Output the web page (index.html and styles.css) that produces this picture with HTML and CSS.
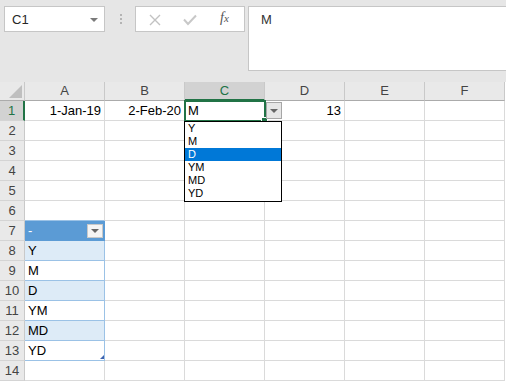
FILE: index.html
```html
<!DOCTYPE html>
<html>
<head>
<meta charset="utf-8">
<link rel="stylesheet" href="styles.css">
</head>
<body>
<div class="toolbar">
  <div class="namebox"><span class="nb-text">C1</span><span class="nb-arrow"></span></div>
  <div class="grip"><i></i><i></i><i></i></div>
  <div class="fbuttons">
    <svg class="ico-x" width="12" height="12" viewBox="0 0 12 12"><path d="M1 1 L11 11 M11 1 L1 11" stroke="#c2c2c2" stroke-width="1.4" fill="none"/></svg>
    <svg class="ico-check" width="14" height="12" viewBox="0 0 14 12"><path d="M1 5.5 L5 10 L13 1.5" stroke="#c8c8c8" stroke-width="2" fill="none"/></svg>
    <span class="fx">f<span class="fx-x">x</span></span>
  </div>
  <div class="formula">M</div>
</div>

<div class="sheet">
  <div class="row head">
    <div class="rh corner"><svg width="24" height="18" viewBox="0 0 24 18"><polygon points="22,3 22,16 9,16" fill="#bfbfbf"/></svg></div>
    <div class="ch">A</div><div class="ch">B</div><div class="ch sel">C</div><div class="ch">D</div><div class="ch">E</div><div class="ch">F</div>
  </div>
  <div class="row">
    <div class="rh sel">1</div>
    <div class="c r">1-Jan-19</div><div class="c r">2-Feb-20</div><div class="c">M</div><div class="c r">13</div><div class="c"></div><div class="c"></div>
  </div>
  <div class="row"><div class="rh">2</div><div class="c"></div><div class="c"></div><div class="c"></div><div class="c"></div><div class="c"></div><div class="c"></div></div>
  <div class="row"><div class="rh">3</div><div class="c"></div><div class="c"></div><div class="c"></div><div class="c"></div><div class="c"></div><div class="c"></div></div>
  <div class="row"><div class="rh">4</div><div class="c"></div><div class="c"></div><div class="c"></div><div class="c"></div><div class="c"></div><div class="c"></div></div>
  <div class="row"><div class="rh">5</div><div class="c"></div><div class="c"></div><div class="c"></div><div class="c"></div><div class="c"></div><div class="c"></div></div>
  <div class="row"><div class="rh">6</div><div class="c above-table"></div><div class="c"></div><div class="c"></div><div class="c"></div><div class="c"></div><div class="c"></div></div>
  <div class="row">
    <div class="rh">7</div>
    <div class="c t-head"><span>-</span><span class="filter-btn"><i></i></span></div>
    <div class="c"></div><div class="c"></div><div class="c"></div><div class="c"></div><div class="c"></div>
  </div>
  <div class="row"><div class="rh">8</div><div class="c t band">Y</div><div class="c"></div><div class="c"></div><div class="c"></div><div class="c"></div><div class="c"></div></div>
  <div class="row"><div class="rh">9</div><div class="c t">M</div><div class="c"></div><div class="c"></div><div class="c"></div><div class="c"></div><div class="c"></div></div>
  <div class="row"><div class="rh">10</div><div class="c t band">D</div><div class="c"></div><div class="c"></div><div class="c"></div><div class="c"></div><div class="c"></div></div>
  <div class="row"><div class="rh">11</div><div class="c t">YM</div><div class="c"></div><div class="c"></div><div class="c"></div><div class="c"></div><div class="c"></div></div>
  <div class="row"><div class="rh">12</div><div class="c t band">MD</div><div class="c"></div><div class="c"></div><div class="c"></div><div class="c"></div><div class="c"></div></div>
  <div class="row"><div class="rh">13</div><div class="c t last">YD<span class="resize"></span></div><div class="c"></div><div class="c"></div><div class="c"></div><div class="c"></div><div class="c"></div></div>
  <div class="row"><div class="rh">14</div><div class="c"></div><div class="c"></div><div class="c"></div><div class="c"></div><div class="c"></div><div class="c"></div></div>
</div>

<div class="selection"><span class="fill-handle"></span></div>
<div class="dd-btn"><i></i></div>
<ul class="dd-list">
  <li>Y</li>
  <li>M</li>
  <li class="hl">D</li>
  <li>YM</li>
  <li>MD</li>
  <li>YD</li>
</ul>
</body>
</html>
```

FILE: styles.css
```css
html, body {
  margin: 0;
  padding: 0;
}
body {
  width: 506px;
  height: 382px;
  overflow: hidden;
  position: relative;
  background: #ffffff;
  font-family: "Liberation Sans", Arial, sans-serif;
  font-size: 13px;
  color: #000;
}

/* ---------- toolbar ---------- */
.toolbar {
  height: 82px;
  box-sizing: border-box;
  background: #e6e6e6;
  display: flex;
  align-items: flex-start;
  padding-top: 6px;
}
.namebox {
  margin-left: 4px;
  width: 101px;
  height: 26px;
  box-sizing: border-box;
  background: #fff;
  border: 1px solid #c6c6c6;
  display: flex;
  align-items: center;
  justify-content: space-between;
  padding: 0 6px 0 7px;
  color: #262626;
  font-size: 13px;
}
.nb-arrow {
  width: 0;
  height: 0;
  border-left: 4px solid transparent;
  border-right: 4px solid transparent;
  border-top: 4px solid #7a7a7a;
  margin-top: 1px;
}
.grip {
  margin-left: 15px;
  margin-top: 8px;
  display: flex;
  flex-direction: column;
  gap: 2px;
}
.grip i {
  display: block;
  width: 2px;
  height: 2px;
  background: #b4b4b4;
}
.fbuttons {
  margin-left: 13px;
  width: 110px;
  height: 26px;
  box-sizing: border-box;
  background: #fff;
  border: 1px solid #c6c6c6;
  display: flex;
  align-items: center;
  padding-left: 13px;
}
.ico-x {
  margin-top: 1px;
}
.ico-check {
  margin-left: 22px;
  margin-top: 1px;
}
.fx {
  margin-left: 23px;
  font-family: "Liberation Serif", "Times New Roman", serif;
  font-style: italic;
  font-size: 14px;
  color: #555;
  margin-top: -2px;
}
.fx-x {
  font-size: 11px;
}
.formula {
  margin-left: 3px;
  flex: 1;
  margin-right: -2px;
  height: 65px;
  box-sizing: border-box;
  background: #fff;
  border: 1px solid #c6c6c6;
  padding: 5px 0 0 12px;
  color: #333;
  font-size: 13px;
}

/* ---------- sheet ---------- */
.sheet {
  display: flex;
  flex-direction: column;
}
.row {
  display: flex;
  height: 20px;
}
.row.head {
  height: 19px;
}
.rh {
  width: 25px;
  flex: none;
  box-sizing: border-box;
  background: #e9e9e9;
  border-right: 1px solid #c9c9c9;
  border-bottom: 1px solid #d4d4d4;
  color: #444;
  text-align: center;
  line-height: 19px;
  font-size: 13px;
}
.rh.corner {
  border-bottom: 1px solid #ababab;
  padding: 0;
  line-height: 0;
}
.rh.corner svg {
  display: block;
}
.rh.sel {
  background: #d2d2d2;
  color: #217346;
  border-right: 2px solid #217346;
}
.ch {
  width: 80px;
  flex: none;
  box-sizing: border-box;
  background: #e9e9e9;
  border-right: 1px solid #c9c9c9;
  border-bottom: 1px solid #ababab;
  color: #444;
  text-align: center;
  line-height: 18px;
  font-size: 13px;
}
.ch.sel {
  background: #d2d2d2;
  color: #217346;
  border-bottom: 2px solid #217346;
}
.c {
  width: 80px;
  flex: none;
  box-sizing: border-box;
  border-right: 1px solid #dadada;
  border-bottom: 1px solid #dadada;
  padding: 0 3px;
  line-height: 20px;
  white-space: nowrap;
  overflow: hidden;
}
.c.r {
  text-align: right;
}
.c.above-table {
  border-bottom-color: #9bc2e6;
}

/* ---------- table ---------- */
.c.t-head {
  background: #5b9bd5;
  color: #fff;
  border-right-color: #5b9bd5;
  border-bottom-color: #5b9bd5;
  display: flex;
  align-items: center;
  justify-content: space-between;
  padding-right: 1px;
}
.filter-btn {
  width: 16px;
  height: 14px;
  box-sizing: border-box;
  background: #f4f4f4;
  border: 1px solid #c8c8c8;
  display: flex;
  align-items: center;
  justify-content: center;
}
.filter-btn i,
.dd-btn i {
  display: block;
  width: 0;
  height: 0;
  border-left: 4px solid transparent;
  border-right: 4px solid transparent;
  border-top: 4px solid #666;
}
.c.t {
  border-right-color: #9bc2e6;
  border-bottom-color: #9bc2e6;
}
.c.band {
  background: #ddebf7;
}
.c.last {
  position: relative;
}
.resize {
  position: absolute;
  right: 0;
  bottom: 1px;
  width: 0;
  height: 0;
  border-left: 4px solid transparent;
  border-bottom: 4px solid #3d62b0;
}

/* ---------- overlays ---------- */
.selection {
  position: absolute;
  left: 184px;
  top: 100px;
  width: 82px;
  height: 22px;
  box-sizing: border-box;
  border: 2px solid #217346;
}
.fill-handle {
  position: absolute;
  right: -4px;
  bottom: -4px;
  width: 5px;
  height: 5px;
  background: #217346;
  border: 1px solid #fff;
}
.dd-btn {
  position: absolute;
  left: 266px;
  top: 102px;
  width: 16px;
  height: 17px;
  box-sizing: border-box;
  background: #e6e6e6;
  border: 1px solid #a6a6a6;
  display: flex;
  align-items: center;
  justify-content: center;
}
.dd-list {
  position: absolute;
  left: 184px;
  top: 121px;
  width: 98px;
  height: 81px;
  box-sizing: border-box;
  margin: 0;
  padding: 0;
  list-style: none;
  background: #fff;
  border: 1px solid #000;
  font-size: 11px;
}
.dd-list li {
  height: 13px;
  line-height: 13px;
  padding-left: 3px;
}
.dd-list li.hl {
  background: #0078d7;
  color: #fff;
}
```
